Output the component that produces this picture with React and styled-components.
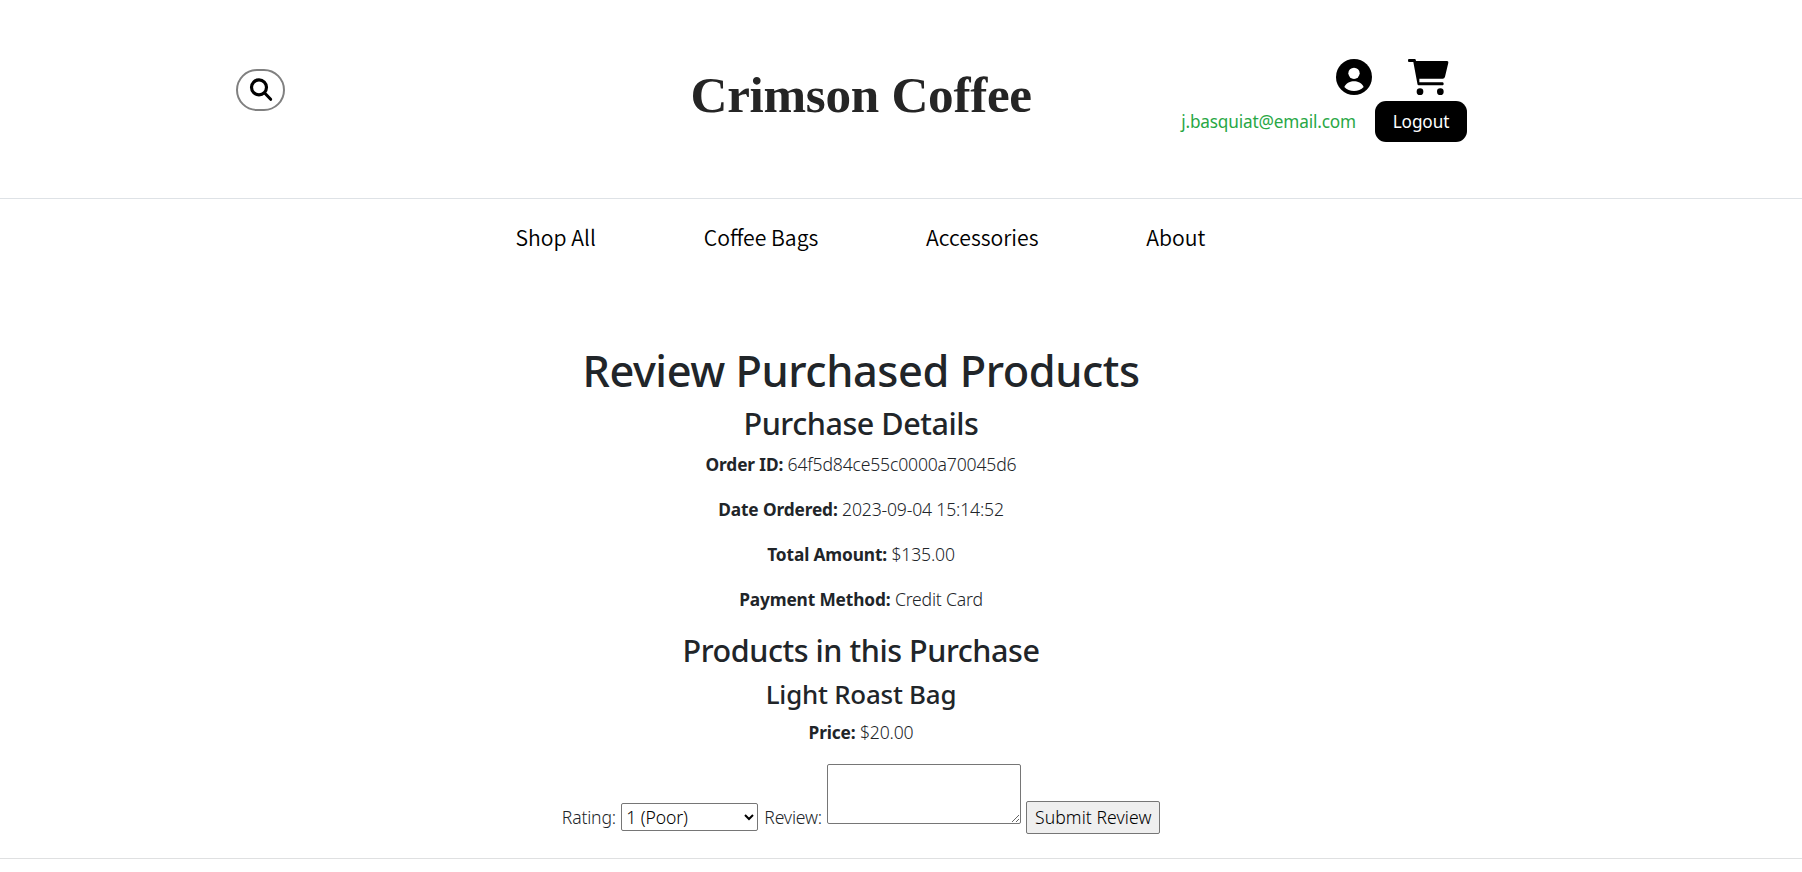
import React from "react";
import styled, { createGlobalStyle } from "styled-components";

const GlobalStyle = createGlobalStyle`
  * { box-sizing: border-box; }
  body {
    margin: 0;
    background: #fff;
    color: #212529;
    font-family: "Noto Sans", "Open Sans", sans-serif;
    font-size: 17.6px;
    font-weight: 300;
    line-height: 27px;
    letter-spacing: -0.18px;
  }
`;

const Header = styled.header`
  display: grid;
  grid-template-columns: 454px 346px 431px;
  align-items: start;
  height: 199px;
  padding: 58px 0 0 236px;
  border-bottom: 1px solid #dee2e6;
`;

const SearchButton = styled.button`
  display: flex;
  align-items: center;
  justify-content: center;
  width: 49px;
  height: 42px;
  margin-top: 11px;
  padding: 0;
  border: 2px solid #808080;
  border-radius: 21px;
  background: #fff;
`;

const Brand = styled.h1`
  margin: 7px 0 0;
  padding-left: 0.5px;
  color: #252525;
  font: 700 51.2px/60px "Liberation Serif", "Times New Roman", serif;
  letter-spacing: -0.3px;
  white-space: nowrap;
`;

const Account = styled.div`
  display: flex;
  flex-direction: column;
  gap: 6px;
`;

const IconRow = styled.div`
  display: flex;
  justify-content: flex-end;
  align-items: flex-start;
  gap: 36px;
  height: 37px;
  padding: 0.5px 18px 0 0;
`;

const SessionRow = styled.div`
  display: flex;
  justify-content: flex-end;
  align-items: center;
  gap: 19px;
`;

const Email = styled.span`
  color: #28a745;
  font-size: 17.2px;
  font-weight: 400;
  letter-spacing: -0.16px;
`;

const LogoutButton = styled.button`
  width: 92px;
  height: 41px;
  padding: 0;
  border: 0;
  border-radius: 11px;
  background: #000;
  color: #fff;
  font: inherit;
  font-size: 17.2px;
  font-weight: 400;
  letter-spacing: -0.1px;
`;

const Nav = styled.nav`
  display: flex;
  justify-content: center;
  gap: 107.8px;
  padding: 22px 81px 0 0;
`;

const NavLink = styled.a`
  color: #000;
  font: 350 21.2px/32px "Noto Sans CJK JP", sans-serif;
  letter-spacing: 0;
  white-space: nowrap;
`;

const Main = styled.main`
  display: flex;
  flex-direction: column;
  align-items: center;
  height: 606px;
  padding: 91px 80px 0 0;
  border-bottom: 1px solid #dfe0e1;
`;

const PageTitle = styled.h1`
  margin: 0 0 7.4px;
  font-size: 43.4px;
  font-weight: 500;
  line-height: 54px;
  letter-spacing: -0.46px;
`;

const SectionTitle = styled.h3`
  margin: ${(p) => p.$top || 0}px 0 8px;
  font-size: 30.5px;
  font-weight: 500;
  line-height: 37.8px;
  letter-spacing: -0.44px;
`;

const ProductTitle = styled.h4`
  margin: 0 0 9px;
  font-size: 25.9px;
  font-weight: 500;
  line-height: 32.4px;
  letter-spacing: -0.22px;
`;

const Detail = styled.p`
  margin: 0 0 18px;
`;

const Term = styled.strong`
  font-size: 17.3px;
  font-weight: 700;
  letter-spacing: -0.13px;
`;

const ReviewForm = styled.form`
  display: flex;
  align-items: flex-end;
  height: 70px;
`;

const Label = styled.label`
  width: ${(p) => p.$width}px;
  margin-bottom: 3px;
  white-space: nowrap;
`;

const RatingSelect = styled.select`
  width: 137px;
  height: 28px;
  margin: 0 6px 3px 0;
  border: 1px solid #767676;
  border-radius: 2px;
  background: #fff;
  color: #000;
  font: inherit;
  letter-spacing: -0.1px;
`;

const ReviewInput = styled.textarea`
  width: 194px;
  height: 60px;
  margin: 0 5px 10px 0;
  border: 1px solid #767676;
  border-radius: 2px;
  background: #fff;
`;

const SubmitButton = styled.button`
  width: 134px;
  height: 33px;
  padding: 0;
  border: 1px solid #767676;
  border-radius: 2px;
  background: #efefef;
  color: #000;
  font: inherit;
  letter-spacing: 0.06px;
  white-space: nowrap;
`;

const SearchIcon = () => (
  <svg width="24" height="24" viewBox="0 0 72 72" fill="none" stroke="#000">
    <circle cx="30" cy="28" r="22.5" strokeWidth="9.5" />
    <path d="M47 45L65 64" strokeWidth="9" strokeLinecap="round" />
  </svg>
);

const UserIcon = () => (
  <svg width="36" height="36" viewBox="0 0 108 108">
    <circle cx="54" cy="54" r="54" />
    <circle cx="54" cy="43" r="17" fill="#fff" />
    <path
      d="M25 84C31 71 43 67 54 67S77 71 83 84C76 92 65 96 54 96S32 92 25 84Z"
      fill="#fff"
    />
  </svg>
);

const CartIcon = () => (
  <svg width="41" height="36" viewBox="0 0 123 108">
    <path d="M2 0H20Q23 0 23.500 3L24 6H117Q122 6 121 11L111 53Q109.500 59 104 59H34V70H104Q107 70 107 74.500T104 79H32Q29 79 28.500 76L16 9H2Q0 8 0 4.500T2 0Z" />
    <circle cx="36" cy="98" r="10" />
    <circle cx="97" cy="98" r="10" />
  </svg>
);

const links = ["Shop All", "Coffee Bags", "Accessories", "About"];

const details = [
  ["Order ID:", "64f5d84ce55c0000a70045d6"],
  ["Date Ordered:", "2023-09-04 15:14:52"],
  ["Total Amount:", "$135.00"],
  ["Payment Method:", "Credit Card"],
];

const DetailLine = ({ term, value }) => (
  <Detail>
    <Term>{term}</Term> {value}
  </Detail>
);

export default function App() {
  return (
    <>
      <GlobalStyle />
      <Header>
        <SearchButton aria-label="Search">
          <SearchIcon />
        </SearchButton>
        <Brand>Crimson Coffee</Brand>
        <Account>
          <IconRow>
            <UserIcon />
            <CartIcon />
          </IconRow>
          <SessionRow>
            <Email>j.basquiat@email.com</Email>
            <LogoutButton>Logout</LogoutButton>
          </SessionRow>
        </Account>
      </Header>
      <Nav>
        {links.map((text) => (
          <NavLink key={text}>{text}</NavLink>
        ))}
      </Nav>
      <Main>
        <PageTitle>Review Purchased Products</PageTitle>
        <SectionTitle>Purchase Details</SectionTitle>
        {details.map(([term, value]) => (
          <DetailLine key={term} term={term} value={value} />
        ))}
        <SectionTitle $top={1}>Products in this Purchase</SectionTitle>
        <ProductTitle>Light Roast Bag</ProductTitle>
        <DetailLine term="Price:" value="$20.00" />
        <ReviewForm>
          <Label $width={59.5}>Rating:</Label>
          <RatingSelect defaultValue="1">
            <option value="1">1 (Poor)</option>
            <option value="2">2 (Fair)</option>
            <option value="3">3 (Good)</option>
            <option value="4">4 (Very Good)</option>
            <option value="5">5 (Excellent)</option>
          </RatingSelect>
          <Label $width={63}>Review:</Label>
          <ReviewInput />
          <SubmitButton type="button">Submit Review</SubmitButton>
        </ReviewForm>
      </Main>
    </>
  );
}
